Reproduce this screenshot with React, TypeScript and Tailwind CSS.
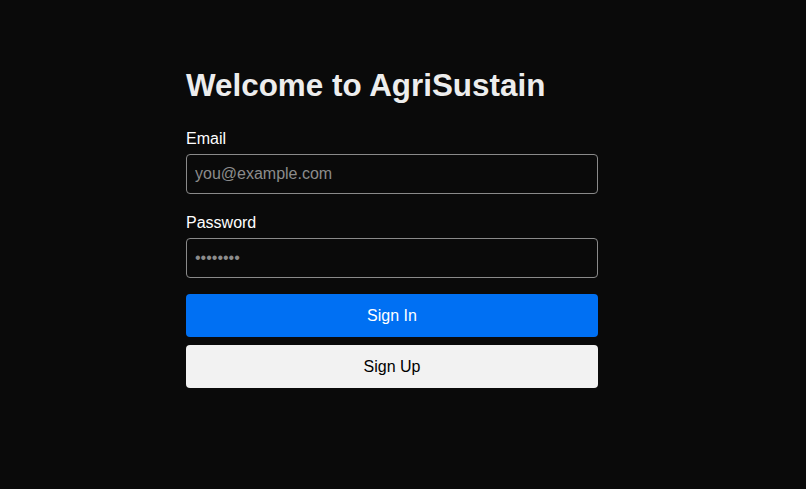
export default function App() {
  return (
    <div className="min-h-screen bg-[#0a0a0a] font-['Liberation_Sans',Arial,sans-serif] text-[#ededed]">
      <div className="w-[412px] pt-[67px] ml-[186px]">
        <h1 className="text-[31.4px] font-bold leading-[37px]">Welcome to AgriSustain</h1>

        <form className="mt-[26px] flex flex-col" onSubmit={(e) => e.preventDefault()}>
          <label className="text-base leading-[18px] text-white">Email</label>
          <input
            type="email"
            placeholder="you@example.com"
            className="mt-[6px] h-10 w-full rounded border border-[#8a8a8a] bg-[#0a0a0a] px-2 text-base text-white placeholder:text-[#8c8c8c] outline-none"
          />

          <label className="mt-5 text-base leading-[18px] text-white">Password</label>
          <input
            type="password"
            placeholder="••••••••"
            className="mt-[6px] h-10 w-full rounded border border-[#8a8a8a] bg-[#0a0a0a] px-2 text-base text-white placeholder:text-[#8c8c8c] outline-none"
          />

          <button
            type="submit"
            className="mt-4 h-[43px] w-full rounded bg-[#0070f3] text-base text-white"
          >
            Sign In
          </button>
          <button
            type="button"
            className="mt-2 h-[43px] w-full rounded bg-[#f2f2f2] text-base text-black"
          >
            Sign Up
          </button>
        </form>
      </div>
    </div>
  );
}
